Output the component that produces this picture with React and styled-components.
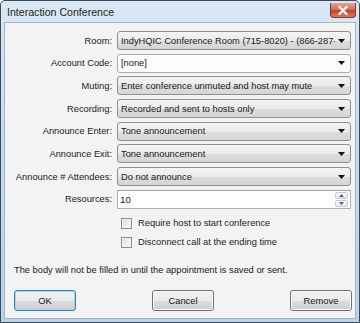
import React from "react";
import styled, { createGlobalStyle } from "styled-components";

const Global = createGlobalStyle`
  html, body { margin: 0; padding: 0; background: #fff; }
  body { font-family: "Liberation Sans", Arial, sans-serif; font-size: 9.3px; color: #1a1a1a; }
  * { box-sizing: border-box; }
`;

const Window = styled.div`
  width: 360px;
  height: 323px;
  border: 1px solid #3c4a58;
  border-radius: 5px 5px 0 0;
  background: linear-gradient(180deg, #dbe7f4 0%, #c9dbee 40%, #bcd2ea 100%);
  display: flex;
  flex-direction: column;
  padding: 0 3px 3px 3px;
`;

const TitleBar = styled.div`
  height: 21px;
  display: flex;
  align-items: center;
  justify-content: space-between;
  padding-left: 3px;
`;

const Title = styled.span`
  font-size: 10.6px;
  color: #1e1e1e;
`;

const CloseButton = styled.div`
  width: 26px;
  height: 15px;
  margin-top: -2px;
  border: 1px solid #6d3a35;
  border-top: 0;
  border-radius: 0 0 4px 4px;
  background: linear-gradient(180deg, #e8a496 0%, #d5715f 45%, #c5452f 55%, #d97a5f 100%);
  display: flex;
  align-items: center;
  justify-content: center;
`;

const Client = styled.div`
  flex: 1;
  background: #f3f3f3;
  border: 1px solid #9fb4ca;
  display: flex;
  flex-direction: column;
  padding: 8px 0 0 3px;
`;

const Form = styled.div`
  display: grid;
  grid-template-columns: 104px 234px;
  column-gap: 5px;
  row-gap: 3.7px;
  align-items: center;
`;

const Label = styled.label`
  text-align: right;
  white-space: nowrap;
`;

const SelectBox = styled.div`
  height: 19px;
  border: 1px solid ${p => (p.$editable ? "#a5acb5" : "#8e8f8f")};
  border-radius: 3px;
  background: ${p =>
    p.$editable
      ? "#fdfdfd"
      : "linear-gradient(180deg, #f4f4f4 0%, #ebebeb 50%, #dddddd 51%, #d6d6d6 100%)"};
  display: flex;
  align-items: center;
  padding: 0 0 0 3px;
  overflow: hidden;
`;

const SelectText = styled.span`
  flex: 1;
  white-space: nowrap;
  overflow: hidden;
  color: #1a1a1a;
`;

const Arrow = styled.div`
  width: 15px;
  flex: none;
  display: flex;
  justify-content: center;
  align-items: center;
  padding-right: 2px;
`;

const SpinBox = styled.div`
  height: 19px;
  border: 1px solid #abadb3;
  border-top-color: #9a9ea8;
  background: #fff;
  display: flex;
  align-items: center;
  padding-left: 2px;
`;

const SpinValue = styled.span`
  flex: 1;
  font-size: 9.8px;
`;

const SpinButtons = styled.div`
  width: 13px;
  height: 15px;
  margin-right: 2px;
  display: flex;
  flex-direction: column;
  gap: 1px;
`;

const SpinHalf = styled.div`
  flex: 1;
  border: 1px solid #c5cdd8;
  border-radius: 2px;
  background: linear-gradient(180deg, #f8fafc, #e3e8ee);
  display: flex;
  align-items: center;
  justify-content: center;
`;

const Checks = styled.div`
  display: flex;
  flex-direction: column;
  gap: 6px;
  margin: 8px 0 0 113px;
`;

const CheckRow = styled.div`
  display: flex;
  align-items: center;
  gap: 6px;
  height: 13px;
`;

const CheckBox = styled.div`
  width: 11px;
  height: 11px;
  border: 1px solid #8f8f8f;
  background: linear-gradient(135deg, #dcdcdc 0%, #f4f4f4 70%, #fbfbfb 100%);
  box-shadow: inset 0 0 0 1px #f0f0f0;
`;

const Note = styled.div`
  margin: 16px 0 0 6px;
`;

const Buttons = styled.div`
  display: flex;
  justify-content: space-between;
  margin: 15px 0 0 6px;
  width: 338px;
`;

const Button = styled.button`
  width: 62px;
  height: 21px;
  font-family: "Liberation Sans", Arial, sans-serif;
  font-size: 9.4px;
  color: #1a1a1a;
  border: 1px solid ${p => (p.$default ? "#3c7fb1" : "#707070")};
  border-radius: 3px;
  background: linear-gradient(180deg, #f2f2f2 0%, #ebebeb 50%, #dddddd 51%, #cfcfcf 100%);
  box-shadow: inset 0 0 0 1px ${p => (p.$default ? "#9fd6f5" : "#fcfcfc")};
  padding: 0;
`;

const DownArrow = () => (
  <svg width="7" height="4" viewBox="0 0 7 4">
    <path d="M0 0H7L3.5 4Z" fill="#111" />
  </svg>
);

const Select = ({ value, editable }) => (
  <SelectBox $editable={editable}>
    <SelectText>{value}</SelectText>
    <Arrow>
      <DownArrow />
    </Arrow>
  </SelectBox>
);

const rows = [
  ["Room:", "IndyHQIC Conference Room (715-8020) - (866-287-89"],
  ["Account Code:", "[none]", true],
  ["Muting:", "Enter conference unmuted and host may mute"],
  ["Recording:", "Recorded and sent to hosts only"],
  ["Announce Enter:", "Tone announcement"],
  ["Announce Exit:", "Tone announcement"],
  ["Announce # Attendees:", "Do not announce"],
];

export default function App() {
  return (
    <>
      <Global />
      <Window>
        <TitleBar>
          <Title>Interaction Conference</Title>
          <CloseButton>
            <svg width="10" height="9" viewBox="0 0 10 9">
              <path d="M1.5 1L8.5 8M8.5 1L1.5 8" stroke="#fff" strokeWidth="2.2" strokeLinecap="square" />
            </svg>
          </CloseButton>
        </TitleBar>
        <Client>
          <Form>
            {rows.map(([label, value, editable]) => (
              <React.Fragment key={label}>
                <Label>{label}</Label>
                <Select value={value} editable={editable} />
              </React.Fragment>
            ))}
            <Label>Resources:</Label>
            <SpinBox>
              <SpinValue>10</SpinValue>
              <SpinButtons>
                <SpinHalf>
                  <svg width="5" height="3" viewBox="0 0 5 3"><path d="M0 3H5L2.5 0Z" fill="#4d6185" /></svg>
                </SpinHalf>
                <SpinHalf>
                  <svg width="5" height="3" viewBox="0 0 5 3"><path d="M0 0H5L2.5 3Z" fill="#4d6185" /></svg>
                </SpinHalf>
              </SpinButtons>
            </SpinBox>
          </Form>
          <Checks>
            <CheckRow>
              <CheckBox />
              <span>Require host to start conference</span>
            </CheckRow>
            <CheckRow>
              <CheckBox />
              <span>Disconnect call at the ending time</span>
            </CheckRow>
          </Checks>
          <Note>The body will not be filled in until the appointment is saved or sent.</Note>
          <Buttons>
            <Button $default>OK</Button>
            <Button>Cancel</Button>
            <Button>Remove</Button>
          </Buttons>
        </Client>
      </Window>
    </>
  );
}
